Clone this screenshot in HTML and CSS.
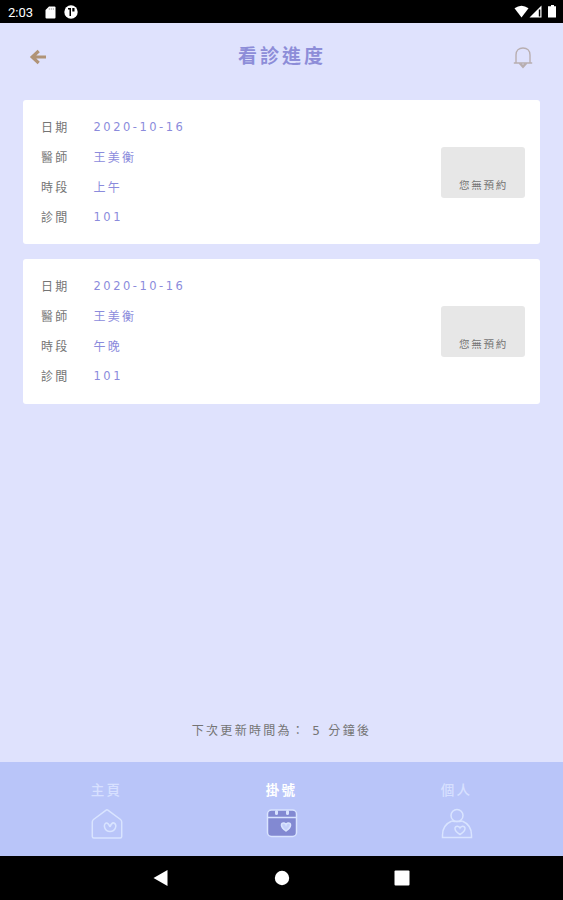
FILE: index.html
```
<!DOCTYPE html>
<html lang="zh-Hant">
<head>
    <meta charset="UTF-8">
    <meta name="viewport" content="width=device-width, initial-scale=1.0">
    <title>看診進度</title>
    <link rel="stylesheet" href="styles.css">
</head>
<body>
    <div class="status-bar">
        <span class="time">2:03</span>
        <svg class="sd-card" width="11" height="13" viewBox="0 0 11 13">
            <path d="M4 0.5h5.5a1 1 0 0 1 1 1v10a1 1 0 0 1-1 1h-8a1 1 0 0 1-1-1V4z" fill="#fff"/>
            <path d="M4.3 2v2M6.3 2v2M8.3 2v2" stroke="#999" stroke-width="0.7"/>
        </svg>
        <svg class="app-icon" width="14" height="14" viewBox="0 0 14 14">
            <circle cx="7" cy="7" r="6.7" fill="#fff"/>
            <path d="M4 3h3v8H5.500V4.500H4zM8.300 3h2.200v3.500H8.300z" fill="#000"/>
        </svg>
        <svg class="signals" width="44" height="14" viewBox="0 0 44 14">
            <path d="M0.5 3.2Q7.5-1.8 14.5 3.2L7.5 12.5z" fill="#fff"/>
            <path d="M27.5 0.5v12H15.5z" fill="#fff"/>
            <path d="M24.8 4.5h1.5v7h-1.5z" fill="#000"/>
            <path d="M35.5 1.2H37V0h3v1.2h2v11.3h-8V1.2z" fill="#fff"/>
        </svg>
    </div>

    <header class="header">
        <svg class="back" width="18" height="16" viewBox="0 0 18 16">
            <path d="M17 8H3.5M9.7 2L3.2 8l6.500 6" fill="none" stroke="#b09377" stroke-width="3.2"/>
        </svg>
        <h1>看診進度</h1>
        <svg class="bell" width="20" height="24" viewBox="0 0 20 24">
            <path d="M0.8 18h18.400M3 18V10C3 5.500 6 3 10 3s7 2.500 7 7v8M6.500 18.500L10 22.500l3.500-4M8 19l2 1.500 2-1.500" fill="none" stroke="#b8aeb0" stroke-width="1.4"/>
        </svg>
    </header>

    <main class="content">
        <section class="card">
            <dl>
                <dt>日期</dt><dd class="num">2020-10-16</dd>
                <dt>醫師</dt><dd>王美衡</dd>
                <dt>時段</dt><dd>上午</dd>
                <dt>診間</dt><dd class="num">101</dd>
            </dl>
            <div class="booking">您無預約</div>
        </section>
        <section class="card">
            <dl>
                <dt>日期</dt><dd class="num">2020-10-16</dd>
                <dt>醫師</dt><dd>王美衡</dd>
                <dt>時段</dt><dd>午晚</dd>
                <dt>診間</dt><dd class="num">101</dd>
            </dl>
            <div class="booking">您無預約</div>
        </section>
        <p class="update">下次更新時間為： <span>5</span> 分鐘後</p>
    </main>

    <nav class="tabs">
        <a class="tab">
            <span>主頁</span>
            <svg width="32" height="32" viewBox="0 0 32 32">
                <path d="M2.5 11.5L14.8 2.3q1.2-.9 2.4 0l12.3 9.2q1.200 1 1.200 2.5v14.500q0 1.500-1.500 1.500H2.800q-1.500 0-1.500-1.500V14q0-1.500 1.200-2.500z"/>
                <path d="M19 19C18 16 16.500 14.500 15 15c-3 2-1.500 8.500 4 8.500s7.500-6.500 4-8.500c-1.500-.5-3 1-4 4"/>
            </svg>
        </a>
        <a class="tab active">
            <span>掛號</span>
            <svg width="32" height="32" viewBox="0 0 32 32">
                <rect class="fill" x="1.5" y="2" width="29" height="26.5" rx="4"/>
                <path d="M1.500 9.500h29"/>
                <path d="M10.500 3.500v2M21.500 3.500v2" class="rings"/>
                <path class="heart" d="M20 23C13.500 18.500 15 14.500 18 15q1.500.4 2 1.800q.5-1.400 2-1.800c3-.5 4.500 3.500-2 8z"/>
            </svg>
        </a>
        <a class="tab">
            <span>個人</span>
            <svg width="32" height="32" viewBox="0 0 32 32">
                <circle cx="16" cy="7.5" r="6"/>
                <path d="M10.800 13C5 15.500 1.500 20.500 1.500 27v2.500h29V27c0-6.500-3.500-11.500-9.300-14"/>
                <path d="M10.800 13q5.200 1.200 10.400 0"/>
                <path d="M19 26.500C12 22.500 13.500 18 16.500 18.200q1.800.3 2.500 1.800q.7-1.500 2.500-1.800c3-.2 4.500 4.300-2.500 8.300z"/>
            </svg>
        </a>
    </nav>

    <div class="system-nav">
        <svg width="16" height="18" viewBox="0 0 16 18"><path d="M0.5 9L14.5 1v16z" fill="#fff"/></svg>
        <svg width="16" height="18" viewBox="0 0 16 18"><circle cx="8" cy="9" r="7.2" fill="#fff"/></svg>
        <svg width="16" height="18" viewBox="0 0 16 18"><rect x="0.5" y="1.5" width="15" height="15" rx="1" fill="#fff"/></svg>
    </div>
</body>
</html>
```
FILE: styles.css
```
* {
    box-sizing: border-box;
}
body {
    margin: 0;
    height: 900px;
    display: flex;
    flex-direction: column;
    background-color: #dfe2fd;
    color: #747474;
    font-family: "DejaVu Sans", "Noto Sans CJK TC", sans-serif;
    font-size: 12px;
    letter-spacing: 2.3px;
}
svg {
    display: block;
    flex: none;
}
.status-bar {
    height: 23px;
    padding: 1px 6px 0 8px;
    display: flex;
    align-items: center;
    background-color: #000;
    color: #fff;
}
.time {
    width: 37px;
    font-family: Roboto, sans-serif;
    font-size: 13px;
    letter-spacing: 0;
}
.app-icon {
    margin-left: 8px;
}
.signals {
    margin-left: auto;
    margin-right: -1px;
}
.header {
    height: 77px;
    padding: 0 30px 10px 29px;
    display: flex;
    align-items: center;
    justify-content: space-between;
}
.header h1 {
    margin: 0;
    padding: 0 0 4px 4px;
    color: #8d8dd8;
    font-family: "Noto Sans CJK TC", sans-serif;
    font-size: 19px;
    line-height: 28px;
    letter-spacing: 3px;
}
.content {
    flex: 1;
    display: flex;
    flex-direction: column;
    gap: 15px;
    padding: 0 23px 16px;
}
.card {
    height: 144.4px;
    padding: 13px 15px 0 18px;
    display: flex;
    justify-content: space-between;
    background-color: #fff;
    border-radius: 3px;
}
dl {
    margin: 0;
    display: grid;
    grid-template-columns: 52.5px auto;
    grid-auto-rows: 30px;
    line-height: 31px;
}
dd {
    margin: 0;
    color: #8b8bdc;
}
.num {
    line-height: 29px;
    font-size: 11.5px;
    letter-spacing: 2.5px;
}
.booking {
    width: 84px;
    height: 51px;
    margin-top: 34px;
    padding: 28px 0 0 1px;
    background-color: #e7e7e7;
    border-radius: 3px;
    font-size: 10.5px;
    line-height: 20px;
    letter-spacing: 1.8px;
    text-align: center;
}
.update {
    margin: auto 0 0;
    line-height: 30px;
    text-align: center;
}
.tabs {
    height: 94px;
    padding: 16px 19px 0;
    display: grid;
    grid-template-columns: repeat(3, 1fr);
    background-color: #b9c5f9;
}
.tab {
    display: flex;
    flex-direction: column;
    align-items: center;
    gap: 6px;
    color: #d7e0ff;
    font-family: "Noto Sans CJK TC", sans-serif;
    font-size: 13.5px;
    line-height: 23px;
    font-weight: 500;
}
.tab svg {
    margin-top: 1px;
    fill: none;
    stroke: #d9e4ff;
    stroke-width: 1.5;
}
.active {
    color: #fff;
    font-weight: bold;
}
.tab .fill {
    fill: #8289d2;
}
.tab .rings {
    stroke-width: 3;
    stroke-linecap: round;
}
.tab .heart {
    fill: #c5d0fb;
}
.system-nav {
    height: 44px;
    padding: 0 153px;
    display: flex;
    align-items: center;
    justify-content: space-between;
    background-color: #000;
}
```
